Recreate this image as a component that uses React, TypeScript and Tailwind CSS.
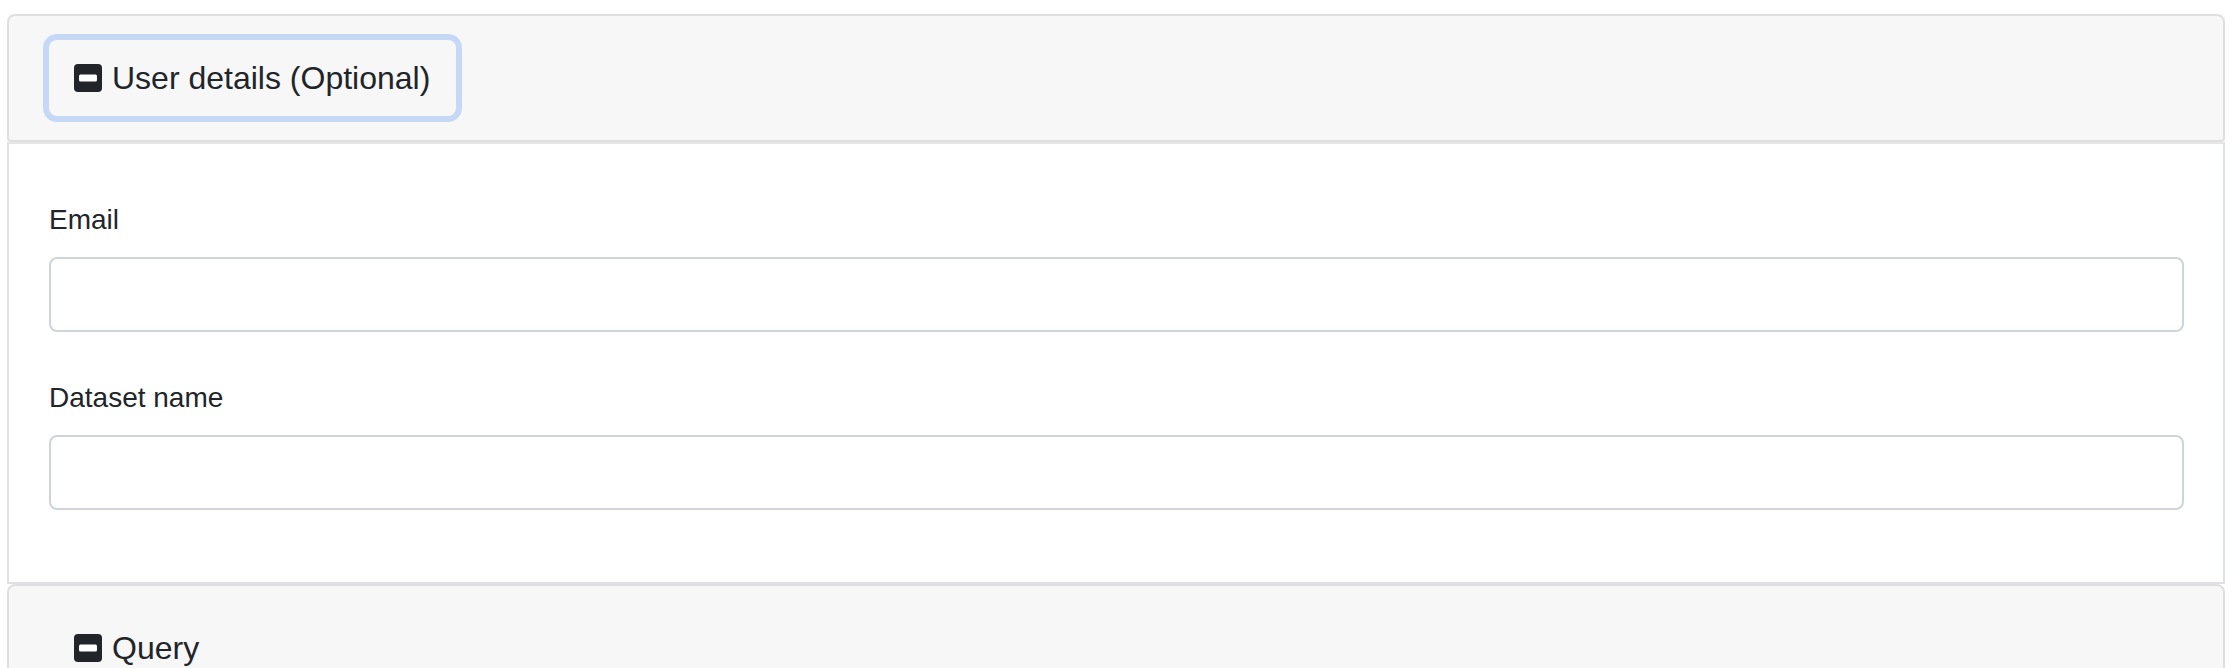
import type { ReactNode } from "react";

function MinusSquare() {
  return (
    <svg width="28" height="28" viewBox="0 0 28 28" className="shrink-0">
      <rect x="0" y="0" width="28" height="28" rx="4" fill="#212529" />
      <rect x="5" y="10.5" width="18" height="7" rx="1.5" fill="#ffffff" />
    </svg>
  );
}

function SectionHeader({ title, focused }: { title: string; focused?: boolean }) {
  return (
    <div className="bg-[#f7f7f7] border-2 border-[#dfdfdf] rounded-t-[8px] rounded-b-[4px] px-[40px] py-[24px]">
      <button
        type="button"
        className={
          "flex items-center h-[76px] px-[24px] border-2 border-transparent rounded-[8px] text-[32px] leading-[48px] text-[#212529] " +
          (focused ? "ring-[6px] ring-[#c5d9f7]" : "")
        }
      >
        <span className="flex items-center mr-[10px] -ml-px">
          <MinusSquare />
        </span>
        {title}
      </button>
    </div>
  );
}

function Field({ label, children }: { label: string; children?: ReactNode }) {
  return (
    <div>
      <label className="block text-[28px] leading-[42px] mb-[16px] text-[#212529]">{label}</label>
      <input
        type="text"
        className="block w-full h-[75px] border-2 border-[#ced4da] rounded-[8px] bg-white px-[24px] text-[32px] outline-none"
      />
      {children}
    </div>
  );
}

export default function App() {
  return (
    <div className="w-[2238px] h-[668px] overflow-hidden bg-white font-['Liberation_Sans',Arial,sans-serif]">
      <div className="ml-[7px] w-[2218px] pt-[14px]">
        <SectionHeader title="User details (Optional)" focused />
        <div className="border-x-2 border-t-2 border-b-2 border-t-[#e4e5e7] border-x-[#dee2e6] border-b-[#dfe1e4] bg-white pl-[40px] pr-[39px] pt-[55px] pb-[72px]">
          <Field label="Email" />
          <div className="mt-[45px]">
            <Field label="Dataset name" />
          </div>
        </div>
        <SectionHeader title="Query" />
      </div>
    </div>
  );
}
